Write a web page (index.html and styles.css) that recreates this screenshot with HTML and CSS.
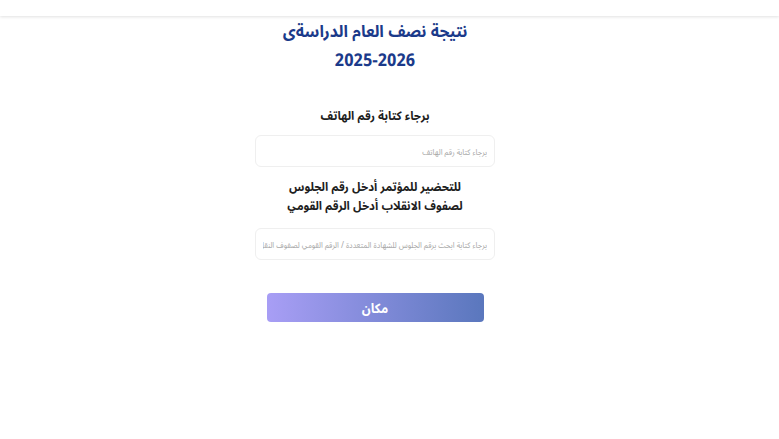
FILE: index.html
```html
<!DOCTYPE html>
<html lang="ar" dir="rtl">
<head>
<meta charset="utf-8">
<title>نتيجة نصف العام الدراسةى</title>
<link rel="stylesheet" href="styles.css">
</head>
<body>
<header class="topbar"></header>
<main class="page">
  <h1 class="title">نتيجة نصف العام الدراسةى</h1>
  <h1 class="title year">2025-2026</h1>
  <form class="form">
    <label class="label" for="phone">برجاء كتابة رقم الهاتف</label>
    <input class="field" id="phone" type="text" placeholder="برجاء كتابة رقم الهاتف">
    <label class="label label-two" for="seat">للتحضير للمؤتمر أدخل رقم الجلوس<br>لصفوف الانقلاب أدخل الرقم القومي</label>
    <input class="field" id="seat" type="text" placeholder="برجاء كتابة ابحث برقم الجلوس للشهادة المتعددة / الرقم القومي لصفوف النقل">
    <button class="btn" type="button">مكان</button>
  </form>
</main>
</body>
</html>
```

FILE: styles.css
```css
* { box-sizing: border-box; }
html, body { margin: 0; padding: 0; background: #fff; }
body {
  font-family: "Noto Sans Arabic UI", "Noto Sans Arabic", "Noto Sans", sans-serif;
  font-stretch: 75%;
  color: #1e1e1e;
}
.topbar {
  height: 16px;
  background: #fff;
  box-shadow: 0 1px 3px rgba(0,0,0,0.12);
}
.page {
  width: 750px;
  margin: 0 auto 0 0;
  display: flex;
  flex-direction: column;
  align-items: center;
}
.title {
  margin: 0;
  font-size: 16.5px;
  font-weight: 700;
  color: #1b3a8a;
  line-height: 29px;
}
.year { font-size: 17.5px; }
.form {
  display: flex;
  flex-direction: column;
  align-items: center;
  margin-top: 32px;
}
.label {
  font-size: 12px;
  font-weight: 700;
  color: #1e1e1e;
  text-align: center;
  line-height: 19px;
  margin-bottom: 10px;
}
.label-two { margin-top: 10px; margin-bottom: 13px; }
.field {
  width: 240px;
  height: 32px;
  border: 1px solid #efefef;
  border-radius: 6px;
  padding: 0 7px;
  font-family: inherit;
  font-stretch: 75%;
  font-size: 8px;
  color: #333;
  outline: none;
}
.field::placeholder { color: #a8a8a8; }
.btn {
  margin-top: 33px;
  width: 217px;
  height: 29px;
  border: none;
  border-radius: 4px;
  background: linear-gradient(to right, #a89ef5, #5a77bd);
  color: #fff;
  font-family: inherit;
  font-stretch: 75%;
  font-size: 13px;
  font-weight: 700;
}
```
